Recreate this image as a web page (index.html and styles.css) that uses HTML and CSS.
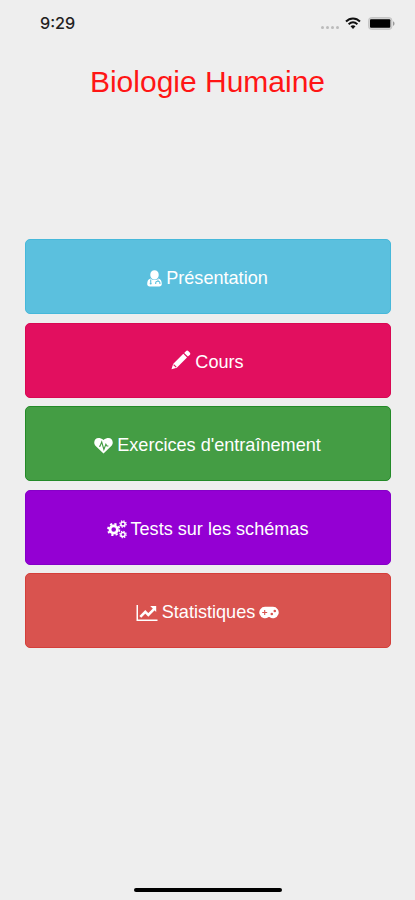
FILE: index.html
```
<!DOCTYPE html>
<html lang="fr">
<head>
<meta charset="utf-8">
<meta name="viewport" content="width=device-width, initial-scale=1">
<title>Biologie Humaine</title>
<link rel="stylesheet" href="styles.css">
</head>
<body>

<div class="status">
	<span class="time">9:29</span>
	<div class="indicators">
		<div class="dots"><i></i><i></i><i></i><i></i></div>
		<svg class="wifi" viewBox="0 0 16 12" width="16" height="12">
			<path d="M1 4.5C5 .4 11 .4 15 4.5M3.6 7.2c2.7-2.5 6.1-2.5 8.8 0" fill="none" stroke="#111" stroke-width="1.9"/>
			<path d="M5.5 9.3c1.6-1.3 3.4-1.3 5 0L8 12z" fill="#111"/>
		</svg>
		<svg class="battery" viewBox="0 0 27 13" width="27" height="13">
			<rect x=".6" y=".6" width="23.3" height="11.8" rx="2.8" fill="#d2d2d2" stroke="#c4c4c4"/>
			<rect x="2" y="2.2" width="20.3" height="8.6" rx="1" fill="#000"/>
			<path d="M25 4.2c2 .8 2 3.8 0 4.6z" fill="#999"/>
		</svg>
	</div>
</div>

<h1 class="title">Biologie Humaine</h1>

<div class="menu">
	<a class="btn btn-info">
		<svg viewBox="0 0 15 17" width="15" height="17">
			<path d="M7.5 .3c2.500 0 4.200 1.700 4.200 4.400S9.800 9.600 7.500 9.600 3.300 7.400 3.300 4.700 5 .3 7.500 .3z"/>
			<path d="M3.600 8.500C1.200 9 .2 11 .2 14c0 1.600 1 2.500 2.500 2.500h9.600c1.500 0 2.500-.9 2.500-2.500 0-3-1-5-3.400-5.500-2.200 2-5.600 2-7.800 0z"/>
			<path class="cut" d="M3.700 9.500v3.200M11 9.500v1.800M8.700 14v-1.200c0-2 4.200-2 4.200 0V14"/>
			<circle class="hole" cx="3.700" cy="13.500" r="1"/>
		</svg>
		<span>Présentation</span>
	</a>
	<a class="btn btn-cours">
		<svg class="pencil" viewBox="0 0 20 20" width="20" height="20">
			<path d="M.5 19.300l1.600-5.300L12.300 3.800l3.700 3.700L5.800 17.700zM13.200 2.900l1.700-1.700c.8-.8 1.800-.8 2.600 0l1.200 1.200c.8.8.8 1.700 0 2.500l-1.800 1.700z"/>
			<path class="cut" d="M2.600 14.600l2.600 2.600"/>
		</svg>
		<span>Cours</span>
	</a>
	<a class="btn btn-success">
		<svg viewBox="0 0 19 17" width="19" height="17">
			<path d="M9.500 16.500L1.700 9C-2.300 4.500 2.500-2.500 9.500 3c7-5.500 11.800 1.500 7.800 6z"/>
			<path class="cut" d="M5 9.200h1L7.700 5l2.200 7.500 2-5.200 1 1.700h1.500"/>
		</svg>
		<span>Exercices d'entraînement</span>
	</a>
	<a class="btn btn-tests">
		<svg viewBox="0 0 20 19" width="20" height="19">
			<circle class="ring" cx="6.700" cy="9.500" r="3.700"/>
			<circle class="teeth" cx="6.700" cy="9.500" r="5.700"/>
			<circle class="ring small" cx="16" cy="4" r="2.100"/>
			<circle class="teeth small" cx="16" cy="4" r="3.200"/>
			<circle class="ring small" cx="16" cy="14.500" r="2.100"/>
			<circle class="teeth small" cx="16" cy="14.500" r="3.200"/>
		</svg>
		<span>Tests sur les schémas</span>
	</a>
	<a class="btn btn-danger">
		<svg viewBox="0 0 22 18" width="22" height="18">
			<path d="M.5 1h1.500v14.500h19.500V17H.5z"/>
			<path class="line" d="M4.300 12.800l5-5 3 3 6-6"/>
			<path d="M14.200 2h6v6z"/>
		</svg>
		<span>Statistiques</span>
		<svg viewBox="0 0 20 13" width="20" height="13">
			<path d="M6 .8h8a5.700 5.700 0 1 1-3.500 10.200h-1A5.700 5.700 0 1 1 6 .8z"/>
			<path class="cut" d="M3.200 6.500h5M5.700 4v5"/>
			<circle class="hole" cx="12.800" cy="8" r="1.300"/>
			<circle class="hole" cx="15.800" cy="5" r="1.300"/>
		</svg>
	</a>
</div>

<div class="home"></div>

</body>
</html>
```

FILE: styles.css
```
*{ margin:0; padding:0; box-sizing:border-box;}
body{
	display:flex;
	flex-direction:column;
	height:900px;
	background:#eee;
	font-family:"Liberation Sans", Arial, sans-serif;
	overflow:hidden;
}
.status{
	display:flex;
	justify-content:space-between;
	height:47px;
	padding:13px 20px 0 40px;
}
.time{
	color:#222;
	font:500 16.200px/20px Inter, sans-serif;
}
.indicators{
	display:flex;
	height:20px;
	align-items:center;
}
.dots{
	display:flex;
	gap:2px;
	margin:8px 6px 0 0;
}
.dots i{
	width:3px;
	height:3px;
	border-radius:50%;
	background:#bbb;
}
.wifi{ margin-right:7px;}
.title{
	height:192px;
	color:#ff1515;
	font-size:30px;
	font-weight:normal;
	line-height:70px;
	text-align:center;
}
.menu{
	display:flex;
	flex-direction:column;
	gap:8.600px;
	padding:0 24px 0 25px;
}
.btn{
	display:flex;
	align-items:center;
	justify-content:center;
	gap:4px;
	height:75px;
	padding:4px 1px 0 0;
	border:1px solid;
	border-radius:5px;
	color:#fff;
	font-size:18.100px;
	white-space:nowrap;
}
.btn svg{ fill:#fff;}
.btn .pencil{ margin-bottom:5px;}
.btn-info{ --bg:#5bc0de; background:#5bc0de; border-color:#46b8da;}
.btn-cours{ --bg:#e20f5f; background:#e20f5f; border-color:#d80852;}
.btn-success{ --bg:#449d44; background:#449d44; border-color:#238a28;}
.btn-tests{ --bg:#9400d3; background:#9400d3; border-color:#8500c8;}
.btn-danger{ --bg:#d9534f; background:#d9534f; border-color:#d43f3a;}

/* icons */
.btn .cut{ fill:none; stroke:var(--bg); stroke-width:1.100;}
.btn .hole{ fill:var(--bg);}
.btn .ring{ fill:none; stroke:#fff; stroke-width:2.800;}
.btn .teeth{ fill:none; stroke:#fff; stroke-width:1.800; stroke-dasharray:2.240;}
.btn .ring.small{ stroke-width:1.500;}
.btn .teeth.small{ stroke-width:1.200; stroke-dasharray:1.260;}
.btn .line{ fill:none; stroke:#fff; stroke-width:2.600;}

.home{
	width:148px;
	height:4px;
	margin:auto auto 8px 134px;
	border-radius:2px;
	background:#000;
}
```
